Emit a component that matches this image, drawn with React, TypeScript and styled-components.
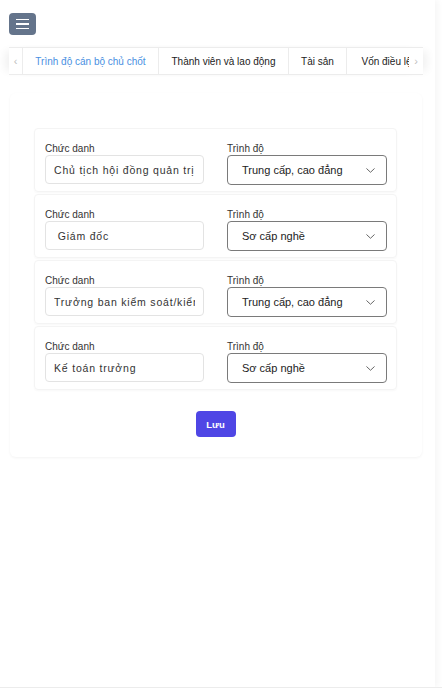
import React from "react";
import styled, { createGlobalStyle } from "styled-components";

const Global = createGlobalStyle`
  html, body { margin: 0; padding: 0; background: #fff; }
  body { font-family: "Liberation Sans", Arial, sans-serif; color: #222; }
  * { box-sizing: border-box; }
`;

const Page = styled.div`
  height: 688px;
  border-bottom: 1px solid #ececec;
  position: relative;
  overflow: hidden;
`;

const Main = styled.div`
  width: 435px;
  height: 100%;
  box-shadow: 3px 0 6px rgba(0, 0, 0, 0.04);
`;

const Header = styled.div`
  height: 47px;
  padding: 13px 0 0 9px;
`;

const MenuButton = styled.button`
  width: 27px;
  height: 22px;
  border: none;
  border-radius: 4px;
  background: #64748b;
  display: flex;
  flex-direction: column;
  align-items: center;
  justify-content: center;
  gap: 3px;
  padding: 0;
  span {
    display: block;
    width: 13px;
    height: 1.5px;
    background: #fff;
  }
`;

const TabBar = styled.div`
  display: flex;
  margin-left: 9px;
  width: 414px;
  height: 28px;
  border-top: 1px solid #ececec;
  border-bottom: 1px solid #ececec;
  position: relative;
  box-shadow: -8px 0 8px -4px rgba(0, 0, 0, 0.06), 8px 0 8px -4px rgba(0, 0, 0, 0.06);
  overflow: hidden;
`;

const Arrow = styled.div<{ $right?: boolean }>`
  width: 14px;
  flex: none;
  display: flex;
  align-items: center;
  justify-content: center;
  color: #c0c0c0;
  font-size: 11px;
  border-right: ${(p) => (p.$right ? "none" : "1px solid #ececec")};
  background: #fff;
  ${(p) => p.$right && "position: absolute; right: 0; top: 0; bottom: 0;"}
`;

const Tab = styled.div<{ $active?: boolean; $w: number }>`
  flex: none;
  width: ${(p) => p.$w}px;
  display: flex;
  align-items: center;
  justify-content: center;
  font-size: 10px;
  white-space: nowrap;
  color: ${(p) => (p.$active ? "#4a90e2" : "#222")};
  border-right: 1px solid #ececec;
`;

const Content = styled.div`
  padding: 18px 0 0 10px;
`;

const Card = styled.div`
  width: 412px;
  border-radius: 6px;
  box-shadow: 0 1px 3px rgba(0, 0, 0, 0.05);
  padding: 35px 25px 20px 24px;
  display: flex;
  flex-direction: column;
  align-items: stretch;
`;

const Rows = styled.div`
  display: flex;
  flex-direction: column;
  gap: 2px;
`;

const Row = styled.div`
  height: 64px;
  border-radius: 4px;
  border: 1px solid #f4f4f4;
  box-shadow: 0 1px 2px rgba(0, 0, 0, 0.03);
  display: grid;
  grid-template-columns: 159px 160px;
  column-gap: 23px;
  padding: 13px 0 0 10px;
`;

const Field = styled.div`
  display: flex;
  flex-direction: column;
`;

const Label = styled.div`
  font-size: 10px;
  line-height: 13px;
  color: #333;
`;

const Input = styled.input`
  width: 100%;
  height: 29px;
  margin: 0;
  border: 1px solid #e3e3e3;
  border-radius: 4px;
  padding: 0 8px;
  font-family: "Liberation Sans", Arial, sans-serif;
  font-size: 10.5px;
  letter-spacing: 0.8px;
  color: #333;
  background: #fff;
  outline: none;
`;

const Select = styled.div`
  height: 30px;
  border: 1px solid #7a7a7a;
  border-radius: 4px;
  padding: 0 11px 0 14px;
  display: flex;
  align-items: center;
  justify-content: space-between;
  font-size: 11px;
  color: #222;
  white-space: nowrap;
`;

const Actions = styled.div`
  display: flex;
  justify-content: center;
  padding-top: 21px;
`;

const SaveButton = styled.button`
  width: 40px;
  height: 26px;
  border: none;
  border-radius: 4px;
  background: #4f46e5;
  color: #fff;
  font-family: "Liberation Sans", Arial, sans-serif;
  font-weight: 700;
  font-size: 9.5px;
  padding: 0;
`;

const Chevron = () => (
  <svg width="9" height="5" viewBox="0 0 9 5" fill="none">
    <path d="M0.75 0.75l3.75 3.5 3.75-3.5" stroke="#666" strokeWidth="1" strokeLinecap="round" strokeLinejoin="round" />
  </svg>
);

const rows = [
  { title: "Chủ tịch hội đồng quản trị", level: "Trung cấp, cao đẳng" },
  { title: " Giám đốc", level: "Sơ cấp nghề" },
  { title: "Trưởng ban kiểm soát/kiểm soát viên", level: "Trung cấp, cao đẳng" },
  { title: "Kế toán trưởng", level: "Sơ cấp nghề" },
];

const tabs = [
  { label: "Trình độ cán bộ chủ chốt", w: 136, active: true },
  { label: "Thành viên và lao động", w: 130 },
  { label: "Tài sản", w: 58 },
  { label: "Vốn điều lệ", w: 80 },
];

export default function App() {
  return (
    <Page>
      <Global />
      <Main>
        <Header>
          <MenuButton aria-label="menu">
            <span />
            <span />
            <span />
          </MenuButton>
        </Header>
        <TabBar>
          <Arrow>‹</Arrow>
          {tabs.map((t) => (
            <Tab key={t.label} $active={t.active} $w={t.w}>
              {t.label}
            </Tab>
          ))}
          <Arrow $right>›</Arrow>
        </TabBar>
        <Content>
          <Card>
            <Rows>
              {rows.map((r, i) => (
                <Row key={i}>
                  <Field>
                    <Label>Chức danh</Label>
                    <Input readOnly value={r.title} />
                  </Field>
                  <Field>
                    <Label>Trình độ</Label>
                    <Select>
                      <span>{r.level}</span>
                      <Chevron />
                    </Select>
                  </Field>
                </Row>
              ))}
            </Rows>
            <Actions>
              <SaveButton>Lưu</SaveButton>
            </Actions>
          </Card>
        </Content>
      </Main>
    </Page>
  );
}
